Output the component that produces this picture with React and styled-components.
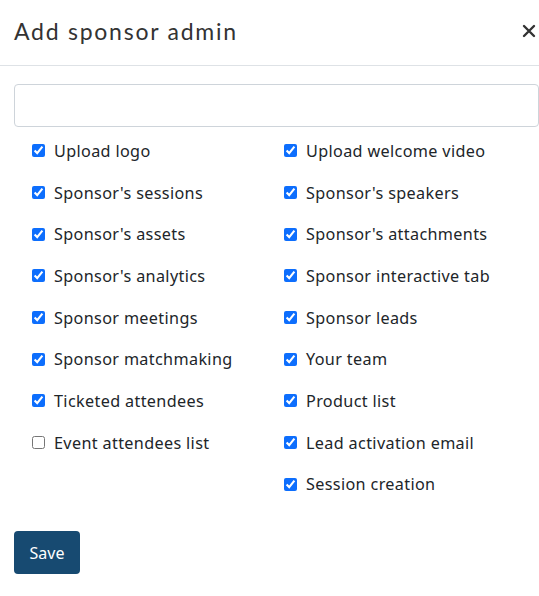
import React from "react";
import styled, { createGlobalStyle } from "styled-components";

const GlobalStyle = createGlobalStyle`
  html, body {
    margin: 0;
    padding: 0;
    background: #fff;
  }
  body {
    font-family: "Noto Sans", "Open Sans", sans-serif;
    color: #212529;
  }
`;

const Modal = styled.div`
  width: 539px;
  height: 596px;
  background: #fff;
  display: flex;
  flex-direction: column;
`;

const Header = styled.div`
  height: 66px;
  box-sizing: border-box;
  display: flex;
  align-items: center;
  justify-content: space-between;
  padding: 0 0 4px 14px;
  border-bottom: 1px solid #dee2e6;
`;

const Title = styled.h5`
  margin: 0;
  font-family: "Lato", sans-serif;
  font-weight: 400;
  font-size: 23px;
  letter-spacing: 1.75px;
  color: #333;
`;

const CloseButton = styled.button`
  border: none;
  background: none;
  padding: 0;
  width: 20px;
  height: 20px;
  display: flex;
  align-items: center;
  justify-content: center;
  cursor: pointer;
`;

const Body = styled.div`
  padding: 18px 0 0 14px;
  display: flex;
  flex-direction: column;
`;

const TextInput = styled.input`
  box-sizing: border-box;
  width: 525px;
  height: 43px;
  border: 1px solid #ced4da;
  border-radius: 4px;
  padding: 6px 12px;
  font-size: 16px;
  outline: none;
`;

const Grid = styled.div`
  display: grid;
  grid-template-columns: 252px 252px;
  padding: 3px 0 0 18px;
`;

const Column = styled.div`
  display: flex;
  flex-direction: column;
`;

const CheckRow = styled.label`
  display: flex;
  align-items: center;
  height: 41.7px;
  font-size: 16.2px;
  letter-spacing: 0.35px;
  color: #212529;
  cursor: pointer;
`;

const CheckBox = styled.input`
  width: 13px;
  height: 13px;
  margin: 0 9px 0 0;
  accent-color: #0d6efd;
`;

const SaveButton = styled.button`
  align-self: flex-start;
  margin-top: 26px;
  width: 66px;
  height: 43px;
  border: none;
  border-radius: 4px;
  background: #174a71;
  color: #fff;
  font-family: "Noto Sans", sans-serif;
  font-size: 16px;
  cursor: pointer;
`;

const left = [
  ["Upload logo", true],
  ["Sponsor's sessions", true],
  ["Sponsor's assets", true],
  ["Sponsor's analytics", true],
  ["Sponsor meetings", true],
  ["Sponsor matchmaking", true],
  ["Ticketed attendees", true],
  ["Event attendees list", false],
];

const right = [
  ["Upload welcome video", true],
  ["Sponsor's speakers", true],
  ["Sponsor's attachments", true],
  ["Sponsor interactive tab", true],
  ["Sponsor leads", true],
  ["Your team", true],
  ["Product list", true],
  ["Lead activation email", true],
  ["Session creation", true],
];

const Item = ({ label, checked }) => (
  <CheckRow>
    <CheckBox type="checkbox" defaultChecked={checked} />
    {label}
  </CheckRow>
);

const App = () => {
  return (
    <>
      <GlobalStyle />
      <Modal>
        <Header>
          <Title>Add sponsor admin</Title>
          <CloseButton aria-label="close">
            <svg width="14" height="14" viewBox="0 0 14 14">
              <path d="M2 2 L12 12 M12 2 L2 12" stroke="#333" strokeWidth="2.4" strokeLinecap="round" />
            </svg>
          </CloseButton>
        </Header>
        <Body>
          <TextInput type="text" />
          <Grid>
            <Column>
              {left.map(([label, checked], idx) => (
                <Item key={`l-${idx}`} label={label} checked={checked} />
              ))}
            </Column>
            <Column>
              {right.map(([label, checked], idx) => (
                <Item key={`r-${idx}`} label={label} checked={checked} />
              ))}
            </Column>
          </Grid>
          <SaveButton>Save</SaveButton>
        </Body>
      </Modal>
    </>
  );
};

export default App;
